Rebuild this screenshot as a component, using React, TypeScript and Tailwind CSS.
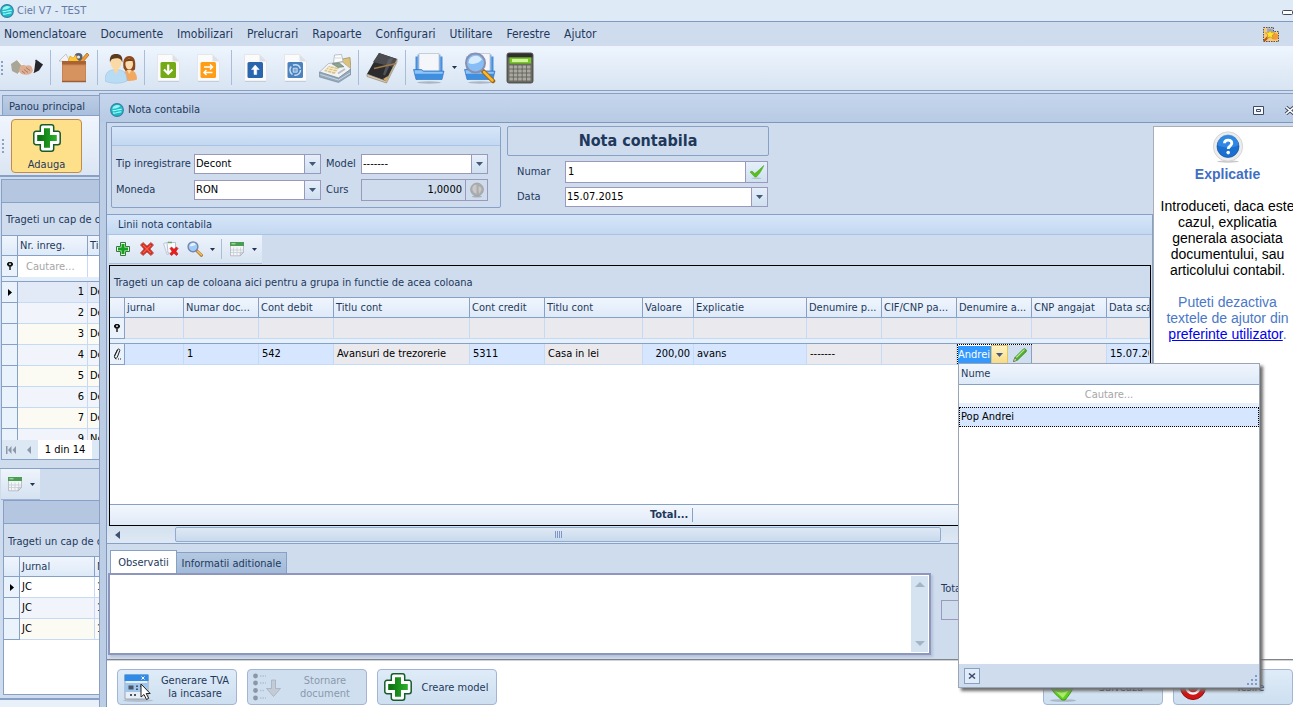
import type { ReactNode } from 'react';

function Globe() {
  return (
    <svg viewBox="0 0 16 16" className="size-[14px] shrink-0" aria-hidden="true">
      <circle cx="8" cy="8" r="7.300" fill="#19bccb" stroke="#3a7fa2" strokeWidth="1.200" />
      <path d="M2.500 6.500a6 6 0 0 1 9.500-3c-3 2.500-6 3.500-9.500 3z" fill="#9df3f2" />
      <path d="M3 8.500c3.200 1.200 6.500-2 10.400-1.200M3.500 11.300c3.500 1 6-1.800 9.600-1" stroke="#a8faf4" strokeWidth="1.400" fill="none" />
    </svg>
  );
}

function Plus({ className }: { className: string }) {
  return (
    <svg viewBox="0 0 28 28" className={className} aria-hidden="true">
      <defs>
        <linearGradient id="plusFill" x1="0" y1="0" x2="1" y2="0">
          <stop offset="0" stopColor="#0a6d10" />
          <stop offset="1" stopColor="#2bb22b" />
        </linearGradient>
      </defs>
      <path
        d="M9.500.8h9a2.200 2.200 0 0 1 2.200 2.200v4.300H25a2.200 2.200 0 0 1 2.200 2.200v9a2.200 2.200 0 0 1-2.200 2.200h-4.300V25a2.200 2.200 0 0 1-2.200 2.200h-9A2.200 2.200 0 0 1 7.300 25v-4.300H3a2.200 2.200 0 0 1-2.200-2.200v-9A2.200 2.200 0 0 1 3 7.300h4.300V3A2.200 2.200 0 0 1 9.500.8z"
        fill="#fff"
        stroke="#175d2b"
        strokeWidth="1.500"
      />
      <path d="M11 4.200h6V11h6.800v6H17v6.800h-6V17H4.200v-6H11z" fill="url(#plusFill)" />
    </svg>
  );
}

function SmallPlus() {
  return (
    <svg viewBox="0 0 16 16" className="size-4" aria-hidden="true">
      <path d="M5.500 1.500h5v4h4v5h-4v4h-5v-4h-4v-5h4z" fill="#e9f7e9" stroke="#2f7a3c" strokeWidth="1" strokeLinejoin="round" />
      <path d="M6.500 3h3v3.500H13v3H9.500V13h-3V9.500H3v-3h3.500z" fill="#17a01d" />
    </svg>
  );
}

function Cross() {
  return (
    <svg viewBox="0 0 16 16" className="size-4" aria-hidden="true">
      <path d="M1.500 4 4 1.500 8 5l4-3.500L14.500 4 11 8l3.500 4-2.500 2.500L8 11l-4 3.500L1.500 12 5 8z" fill="#d4261b" stroke="#b9655d" strokeWidth="1" />
      <path d="M4 4l8 8M12 4l-8 8" stroke="#f2604f" strokeWidth="1.200" />
    </svg>
  );
}

function CopyCross() {
  return (
    <svg viewBox="0 0 16 16" className="size-4" aria-hidden="true">
      <path d="M.5 2.500 6 1l3 11-5 1.500z" fill="#f3f6fa" stroke="#b4bfd0" strokeWidth=".8" />
      <path d="M4 1.500h8.500V12H5z" fill="#fbfcff" stroke="#a9b4c6" strokeWidth=".8" />
      <path d="M5 1.500h4" stroke="#6aa86a" strokeWidth="1.500" />
      <path d="m7 7.500 1.500-1.500 2.500 2.300L13.500 6 15 7.500 13 10.300l2 2.700-1.500 1.500-2.500-2.200-2.500 2.200L7 13l2-2.700z" fill="#ee1c1c" stroke="#b71515" strokeWidth=".6" />
    </svg>
  );
}

function Magnifier({ className }: { className: string }) {
  return (
    <svg viewBox="0 0 16 16" className={className} aria-hidden="true">
      <path d="m9.500 9.500 5 4.800" stroke="#b77a2c" strokeWidth="3" strokeLinecap="round" />
      <path d="m10.500 10.200 4 3.900" stroke="#f3c35f" strokeWidth="1.400" strokeLinecap="round" />
      <circle cx="6" cy="5.800" r="4.900" fill="#9fcdf8" stroke="#7585ad" strokeWidth="1.400" />
      <path d="M2.800 5a3.300 3.300 0 0 1 6-1.500c-2 1.500-4 2-6 1.500z" fill="#e6f4ff" />
    </svg>
  );
}

function Sheet() {
  return (
    <svg viewBox="0 0 16 16" className="size-4" aria-hidden="true">
      <path d="M1.500 1.500h13v9.800l-3.300 3.500H1.500z" fill="#f3f5f7" stroke="#b3bac4" strokeWidth=".9" />
      <path d="M1 1h14v4H1z" fill="#4b9d51" />
      <path d="M2.500 2.800h4" stroke="#bfe6bf" />
      <path d="M4.500 6.500V14M8 6.500V14M11.500 6.500v4M2 9h12M2 11.500h9" stroke="#c7ced8" strokeWidth=".8" />
      <path d="M14.500 11.300h-3.300v3.500z" fill="#d7dce3" stroke="#a7afba" strokeWidth=".6" />
    </svg>
  );
}

function Caret() {
  return (
    <svg viewBox="0 0 5 3" className="h-[3px] w-[5px] shrink-0 text-[#1f3352]" aria-hidden="true">
      <path d="M0 0h5L2.500 3z" fill="currentColor" />
    </svg>
  );
}

function DropCaret() {
  return (
    <svg viewBox="0 0 7 4" className="h-1 w-[7px] shrink-0 text-[#44587a]" aria-hidden="true">
      <path d="M0 0h7L3.500 4z" fill="currentColor" />
    </svg>
  );
}

function Check({ className }: { className: string }) {
  return (
    <svg viewBox="0 0 16 16" className={className} aria-hidden="true">
      <ellipse cx="7.500" cy="14.200" rx="5" ry=".8" fill="#b4c1cc" />
      <path d="M1 8 3 7l2.800 2.600C8.500 7.500 11.500 4.500 14.800 1.500 12.800 6.500 10 10.500 7.300 13H5.800z" fill="#56c01f" stroke="#3f9f1a" strokeWidth=".5" />
    </svg>
  );
}

function Handshake() {
  return (
    <svg viewBox="0 0 32 32" className="size-8" aria-hidden="true">
      <path d="M0 12 6 8l5 6-4 8-6-3z" fill="#a9a697" />
      <path d="m6 8 2-.6 5 6.500-4 8.600-2-.5 4-8z" fill="#f4f2ec" />
      <path d="m25 7.500 7 5-4 6-5 2.500-4-6z" fill="#24262b" />
      <path d="m19 13 4-5 1.500 1-1.500 11-2 .5z" fill="#edeff3" />
      <path d="M9 14.500c2-2 5-1.500 6-.8 2-1 4-.6 5.500.8l1.500 4c-1 3-4 4.500-7 4.200-3 0-6-1-7-3.200z" fill="#dcae93" />
      <path d="M11 19l3 2.500M13 17.500l4 3M15 15.500l4 3" stroke="#a97555" strokeWidth=".9" />
    </svg>
  );
}

function Box() {
  return (
    <svg viewBox="0 0 32 32" className="size-8" aria-hidden="true">
      <path d="m1 9 7-7 4 8z" fill="#f3f3f3" stroke="#b9bcc0" strokeWidth=".8" />
      <circle cx="20.500" cy="5" r="4" fill="#54606b" />
      <circle cx="20.500" cy="5" r="1.600" fill="#e6e9ec" />
      <path d="m10 10 2-6 3 2 3-3 1 4 3 3z" fill="#ffc62f" stroke="#db9320" strokeWidth=".6" />
      <path d="m22 9 7-8 2 2-6 7z" fill="#f79c2c" stroke="#9c6322" strokeWidth=".7" />
      <path d="M4 9h24v21H4z" fill="#c98352" />
      <path d="M4 9h24v3.500H4z" fill="#a86236" />
      <path d="M5 13.500h22V29L5 30z" fill="#d69360" />
      <path d="M4 29.500h24" stroke="#9c5d34" strokeWidth="1.500" />
    </svg>
  );
}

function People() {
  return (
    <svg viewBox="0 0 32 32" className="size-8" aria-hidden="true">
      <path d="M18.500 16c-1-7 .5-12 5.800-12S31 9 30 17.500l-3 2h-6z" fill="#8a4a1d" />
      <path d="M17 28c0-6.500 2.500-10 7-10 5 0 8 3 8 9.500-3 1.500-9 2-15 .5z" fill="#f3a862" />
      <path d="M22 18h4.500l-2.300 4z" fill="#fbd9a5" />
      <ellipse cx="24.200" cy="12" rx="3.800" ry="5.500" fill="#fbdcae" />
      <path d="M20 10c1-4 6-4.500 8.500-1-3 .3-5-.5-8.500 1z" fill="#7a3f17" />
      <path d="M0 29c0-8 3-11.500 11-11.500S22 21 22 29c-6 3-16 3-22 0z" fill="#b9dcf5" stroke="#8fbce0" strokeWidth=".5" />
      <path d="M8 17h6l-3 5.500z" fill="#f9d3a0" />
      <ellipse cx="11" cy="10.500" rx="5.500" ry="7" fill="#fbd9a5" />
      <path d="M5 10.500C4.200 4.500 6.500 2 11 2s7.200 2.500 6.300 8.500c-.9-3-2-4-4.200-4.300-3 .4-7-.8-8.100 4.300z" fill="#5b3a20" />
    </svg>
  );
}

function DocIcon({ tone, children }: { tone: string; children: ReactNode }) {
  return (
    <svg viewBox="0 0 32 32" className="size-8" aria-hidden="true">
      <path d="M5.500 2.500h15l7 7V29h-22z" fill="#fbfbfc" stroke="#dfe3e8" strokeWidth=".8" />
      <path d="M20.500 2.500v7h7z" fill="#dde1e6" />
      <path d="M6 29.500h21" stroke="#c5ced8" />
      <rect x="8.500" y="10" width="15.500" height="16" rx="1.500" fill={tone} />
      {children}
    </svg>
  );
}

function Register() {
  return (
    <svg viewBox="0 0 32 32" className="size-8" aria-hidden="true">
      <path d="m18 8 13-2.500 1 12-9 6z" fill="#dcc27a" stroke="#8d7f55" strokeWidth=".6" />
      <path d="m14.500 11 1-8 7-.5 1.500 7z" fill="#fdfdfe" stroke="#aab3bd" strokeWidth=".8" />
      <path d="M16 6h6" stroke="#c4ccd4" strokeWidth=".8" />
      <path d="m.5 20 9-8.500 14-1.500 8.500 7-12.500 9z" fill="#f0f2f4" stroke="#98a0a8" strokeWidth=".6" />
      <path d="m.5 20 19 6L32 17v5.500l-12.500 8L.5 25z" fill="#93a9bd" stroke="#748596" strokeWidth=".6" />
      <path d="m1.500 22.500 18 5.500 11.500-7" stroke="#c9d6e2" strokeWidth="1" fill="none" />
      <path d="m5 19 5-5 10 2-4.500 6z" fill="#d9c48c" />
      <path d="m7 17.500 10.500 2.500M8.800 15.700 19 17.800M8 20l3.500-5.500M12 21l3.500-5.500" stroke="#fff7dc" strokeWidth=".8" fill="none" />
      <path d="m13 11.800 7-1 5 4-6 .7z" fill="#8aa48d" stroke="#5d6f63" strokeWidth=".5" />
      <path d="m19 21.500 7-4.500" stroke="#b5bec7" strokeWidth="1.500" />
    </svg>
  );
}

function Book() {
  return (
    <svg viewBox="0 0 32 32" className="size-8" aria-hidden="true">
      <path d="m13 1 18 6-11 22L1 22z" fill="#2c2c2e" />
      <path d="m13 1 18 6-4 8L7 10z" fill="#4b4c50" />
      <path d="m22 8 3-2.500 2 1-8 17-2-1z" fill="#6b6d72" opacity=".6" />
      <path d="m1 22 19 7 11-22v3L20.500 31 1 24.500z" fill="#d9cdb6" stroke="#77654c" strokeWidth=".5" />
      <path d="m8 16.500 22-5" stroke="#a07a4a" strokeWidth="1.300" />
      <path d="m17 27 5-3-1 6z" fill="#d2aa6a" />
    </svg>
  );
}

function FolderBody() {
  return (
    <>
      <ellipse cx="16" cy="30.500" rx="12" ry="1.200" fill="#aab6c3" />
      <path d="M2.500 4.500h27V22h-27z" fill="#4a8ddb" />
      <path d="M4.500 2.500h23V22h-23z" fill="#7db2ec" />
      <path d="M6 1.500h20V19H6z" fill="#f4f6f9" stroke="#b5bdc8" strokeWidth=".7" />
      <path d="M.5 17.500h8l2 1.500h20.500L29 27.500H3z" fill="#3f8fe0" stroke="#2b6fbf" strokeWidth=".6" />
      <path d="M1.500 18.300h7l2 1.500h19.500l-.5 2H2z" fill="#8ec4f6" />
    </>
  );
}

function Folder() {
  return (
    <svg viewBox="0 0 32 32" className="size-8" aria-hidden="true">
      <FolderBody />
    </svg>
  );
}

function FolderSearch() {
  return (
    <svg viewBox="0 0 32 32" className="size-8" aria-hidden="true">
      <FolderBody />
      <path d="m19 19 10 10" stroke="#9a6411" strokeWidth="4.500" strokeLinecap="round" />
      <path d="m20 20 8.500 8.500" stroke="#ffb62e" strokeWidth="2.500" strokeLinecap="round" />
      <circle cx="11.500" cy="11" r="9.500" fill="#86bdf4" stroke="#8a8fae" strokeWidth="2" />
      <path d="M4.500 11a7.200 7.200 0 0 1 13.500-3.500C15 11.500 9 13 4.500 11z" fill="#d7ebff" />
    </svg>
  );
}

function Calculator() {
  const rows = [13.5, 17.5, 21.5, 25.5];
  const cols = [5.4, 9.8, 14.2, 18.6, 23];
  return (
    <svg viewBox="0 0 32 32" className="size-8" aria-hidden="true">
      <rect x="3" y="1" width="26" height="30" rx="2" fill="#6a6962" stroke="#3b3b37" strokeWidth=".8" />
      <rect x="3.500" y="1.500" width="25" height="4" rx="1.500" fill="#30312c" />
      <rect x="5.500" y="5.500" width="21.500" height="6" fill="#76c823" />
      <rect x="8" y="7" width="16" height="3" fill="#d0f59d" />
      {rows.map((y) => cols.map((x) => <rect key={`${x}-${y}`} x={x} y={y} width="3.500" height="3" rx=".5" fill="#a9a9a2" />))}
    </svg>
  );
}

function Sep() {
  return (
    <span className="flex w-[7px] shrink-0 justify-center self-stretch py-1" aria-hidden="true">
      <span className="w-px bg-[#a9bdd8]" />
    </span>
  );
}

function ToolButton({ label, children }: { label: string; children: ReactNode }) {
  return (
    <button type="button" aria-label={label} className="flex w-10 shrink-0 items-center justify-center">
      {children}
    </button>
  );
}

function SmallTool({ label, children }: { label: string; children: ReactNode }) {
  return (
    <button type="button" aria-label={label} className="flex h-full w-6 shrink-0 items-center justify-center">
      {children}
    </button>
  );
}

function CaretButton({ label }: { label: string }) {
  return (
    <button type="button" aria-label={label} className="flex h-full w-[11px] shrink-0 items-center justify-center">
      <Caret />
    </button>
  );
}

function Grip() {
  return (
    <span className="flex w-1 shrink-0 flex-col items-center justify-center gap-0.5 self-stretch" aria-hidden="true">
      <span className="size-0.5 bg-[#8ba2c4]" />
      <span className="size-0.5 bg-[#8ba2c4]" />
      <span className="size-0.5 bg-[#8ba2c4]" />
      <span className="size-0.5 bg-[#8ba2c4]" />
    </span>
  );
}

function Combo({ id, value }: { id: string; value: string }) {
  return (
    <span className="flex h-5 min-w-0 flex-1 border border-[#9a98bb] bg-white">
      <select id={id} className="min-w-0 flex-1 appearance-none bg-white px-px text-black outline-none">
        <option>{value}</option>
      </select>
      <span className="flex w-4 items-center justify-center border-l border-[#9a98bb] bg-linear-to-b from-[#e6effa] to-[#cfe0f0]" aria-hidden="true">
        <DropCaret />
      </span>
    </span>
  );
}

function Pin() {
  return (
    <svg viewBox="0 0 6 8" className="mx-auto h-2 w-1.5" aria-hidden="true">
      <path d="M0 1.500 1.500 0h3L6 1.500V3L4.500 4.500H3.700V8H2.300V4.500H1.500L0 3z" fill="#111" />
      <rect x="2" y="1.500" width="2" height="1.200" fill="#fff" />
    </svg>
  );
}

function RowArrow() {
  return (
    <svg viewBox="0 0 4 7" className="mx-auto h-[7px] w-1" aria-hidden="true">
      <path d="M0 0v7l4-3.500z" fill="#000" />
    </svg>
  );
}

function ActionButton({ icon, lines, disabled }: { icon: ReactNode; lines: string[]; disabled?: boolean }) {
  return (
    <button
      type="button"
      disabled={disabled}
      className="flex h-9 w-[120px] shrink-0 items-center rounded-sm border border-[#a3b5d4] bg-linear-to-b from-[#dfebf8] to-[#cddff0] pl-1 text-[#1e395b] disabled:bg-none disabled:bg-[#d0dfef] disabled:text-[#8a99ad]"
    >
      {icon}
      <span className="flex flex-1 flex-col text-center leading-[13px]">
        {lines.map((line) => (
          <span key={line}>{line}</span>
        ))}
      </span>
    </button>
  );
}

const MENU = ['Nomenclatoare', 'Documente', 'Imobilizari', 'Prelucrari', 'Rapoarte', 'Configurari', 'Utilitare', 'Ferestre', 'Ajutor'];

const HEAD = 'overflow-hidden border-r border-b border-[#86a0c6] bg-linear-to-b from-[#f0f5fd] to-[#deeaf8] p-0 pl-0.5 text-left font-normal whitespace-nowrap text-[#1e395b]';
const INDICATOR = 'border-r border-b border-[#86a0c6] bg-[#eaf2fc] p-0';

function Sidebar() {
  const entries = [
    ['1', 'Decont'],
    ['2', 'Decont'],
    ['3', 'Decont'],
    ['4', 'Decont'],
    ['5', 'Decont'],
    ['6', 'Decont'],
    ['7', 'Decont'],
    ['9', 'Nota'],
  ];
  return (
    <aside className="flex w-[99px] shrink-0 flex-col overflow-hidden whitespace-nowrap">
      <div className="mt-1 ml-0.5 flex h-5 shrink-0 items-center border border-r-0 border-b-0 border-[#86a0c6] bg-linear-to-b from-[#bccde5] to-[#a9bfdc] pl-1.5 pt-0.5 text-[#1e395b]">Panou principal</div>
      <div className="flex h-[62px] shrink-0 border-t border-b-2 border-[#86a0c6] bg-linear-to-b from-[#f0f5fd] to-[#dbe6f3] pt-[3px] pb-0.5">
        <span className="flex px-px"><Grip /></span>
        <button type="button" className="ml-[5px] flex w-[71px] flex-col items-center rounded-sm border border-[#c58a45] bg-[#ffe08a] pt-1 text-[#1e395b]">
          <Plus className="size-7" />
          <span className="mt-1.5">Adauga</span>
        </button>
      </div>

      <section className="mt-0.5 ml-px flex h-[281px] shrink-0 flex-col overflow-hidden border-y border-l border-[#86a0c6]">
        <div className="h-[23px] shrink-0 border-b border-[#86a0c6] bg-[#b5c7e0]" />
        <div className="flex h-[33px] shrink-0 items-center border-b border-[#86a0c6] pt-0.5 pl-1 text-[#1e395b]">Trageti un cap de coloana</div>
        <div className="min-h-0 flex-1 overflow-hidden bg-white">
          <table className="w-40 table-fixed border-separate border-spacing-0">
            <colgroup>
              <col className="w-4" />
              <col className="w-[70px]" />
              <col />
            </colgroup>
            <thead>
              <tr className="h-5">
                <th className={HEAD} aria-label="Rand" />
                <th className={HEAD}>Nr. inreg.</th>
                <th className={HEAD}>Tip</th>
              </tr>
            </thead>
            <tbody>
              <tr className="h-[21px]">
                <td className={INDICATOR}><Pin /></td>
                <td className="border-r border-[#c5daf5] p-0">
                  <input aria-label="Cautare numar" placeholder="Cautare..." className="block w-full pl-2 outline-none placeholder:text-[#a6a6a6]" />
                </td>
                <td className="p-0" />
              </tr>
              <tr className="h-[5px]">
                <td colSpan={3} className="border-b border-[#86a0c6] bg-[#e4eefb] p-0" />
              </tr>
              {entries.map(([no, kind], i) => (
                <tr key={no} className={`h-[21px] ${i === 0 ? 'bg-[#e1eaf6]' : i % 2 ? 'bg-[#f1f5fb]' : 'bg-[#fbfaf3]'}`}>
                  <td className={INDICATOR}>{i === 0 && <RowArrow />}</td>
                  <td className="border-r border-b border-[#c5daf5] p-0 pr-[3px] text-right">{no}</td>
                  <td className="border-b border-[#c5daf5] p-0 pl-0.5">{kind}</td>
                </tr>
              ))}
            </tbody>
          </table>
        </div>
        <div className="flex h-[19px] shrink-0 items-center bg-[#dde8f5] text-[#8c98a9]">
          <button type="button" aria-label="Prima" className="flex w-[18px] justify-center">
            <svg viewBox="0 0 10 8" className="h-2 w-2.5"><path d="M0 0h1.500v8H0zM5.500 0v8L2 4zM10 0v8L6.500 4z" fill="currentColor" /></svg>
          </button>
          <button type="button" aria-label="Anterioara" className="flex w-[18px] justify-center">
            <svg viewBox="0 0 4 8" className="h-2 w-1"><path d="M4 0v8L0 4z" fill="currentColor" /></svg>
          </button>
          <span className="flex h-full w-[54px] items-center justify-center bg-white text-black">1 din 14</span>
        </div>
      </section>

      <div className="mt-2 flex h-8 shrink-0 border-t border-[#86a0c6]">
        <div className="ml-px flex w-[39px] items-center border-b border-[#9db2d2] bg-linear-to-b from-[#eef4fb] to-[#d5e2f1] pl-0.5">
          <SmallTool label="Export"><Sheet /></SmallTool>
          <CaretButton label="Optiuni export" />
        </div>
      </div>

      <section className="ml-[3px] flex min-h-0 flex-1 flex-col overflow-hidden border-y border-l border-[#86a0c6] bg-white">
        <div className="h-[23px] shrink-0 border-b border-[#86a0c6] bg-[#b5c7e0]" />
        <div className="flex h-[33px] shrink-0 items-center border-b border-[#86a0c6] bg-[#cfdcee] pt-1 pl-1 text-[#1e395b]">Trageti un cap de coloana</div>
        <table className="w-40 table-fixed border-separate border-spacing-0">
          <colgroup>
            <col className="w-4" />
            <col className="w-[75px]" />
            <col />
          </colgroup>
          <thead>
            <tr className="h-5">
              <th className={HEAD} aria-label="Rand" />
              <th className={HEAD}>Jurnal</th>
              <th className={HEAD}>N</th>
            </tr>
          </thead>
          <tbody>
            {['bg-white', 'bg-[#f1f5fb]', 'bg-[#fbfaf3]'].map((tone, i) => (
              <tr key={tone} className={`h-[21px] ${tone}`}>
                <td className={INDICATOR}>{i === 0 && <RowArrow />}</td>
                <td className="border-r border-b border-[#c5daf5] p-0 pl-0.5">JC</td>
                <td className="border-b border-[#c5daf5] p-0 pl-0.5">1</td>
              </tr>
            ))}
          </tbody>
        </table>
      </section>
      <div className="mt-[3px] h-[9px] shrink-0 border-t-2 border-[#86a0c6] bg-[#e8f0fa]" />
    </aside>
  );
}

const COLUMNS = [
  { title: 'jurnal', value: '', width: 'w-[59px]' },
  { title: 'Numar doc...', value: '1', width: 'w-[75px]' },
  { title: 'Cont debit', value: '542', width: 'w-[75px]' },
  { title: 'Titlu cont', value: 'Avansuri de trezorerie', width: 'w-[136px]', locked: true },
  { title: 'Cont credit', value: '5311', width: 'w-[75px]' },
  { title: 'Titlu cont', value: 'Casa in lei', width: 'w-[98px]', locked: true },
  { title: 'Valoare', value: '200,00', width: 'w-[51px]', right: true },
  { title: 'Explicatie', value: 'avans', width: 'w-[113px]' },
  { title: 'Denumire p...', value: '-------', width: 'w-[75px]', locked: true },
  { title: 'CIF/CNP pa...', value: '', width: 'w-[75px]', locked: true },
  { title: 'Denumire a...', value: 'Andrei', width: 'w-[75px]', editing: true },
  { title: 'CNP angajat', value: '', width: 'w-[75px]', locked: true },
  { title: 'Data scadenta', value: '15.07.2015', width: '' },
];

function EntryGrid() {
  return (
    <div className="mr-px ml-0.5 flex min-h-0 flex-1 flex-col overflow-hidden border border-black bg-white">
      <div className="flex h-8 shrink-0 items-center border-b border-[#86a0c6] bg-[#cfdcee] pt-0.5 pl-1 text-[#1e395b]">
        Trageti un cap de coloana aici pentru a grupa in functie de acea coloana
      </div>
      <table className="w-full table-fixed border-separate border-spacing-0">
        <colgroup>
          <col className="w-[15px]" />
          {COLUMNS.map((c, i) => (
            <col key={i} className={c.width} />
          ))}
        </colgroup>
        <thead>
          <tr className="h-5">
            <th className={HEAD} aria-label="Rand" />
            {COLUMNS.map((c, i) => (
              <th key={i} className={HEAD}>{c.title}</th>
            ))}
          </tr>
        </thead>
        <tbody>
          <tr className="h-[21px] bg-[#eaeaee]">
            <td className={INDICATOR}><Pin /></td>
            {COLUMNS.map((_, i) => (
              <td key={i} className="border-r border-b border-[#c5daf5] p-0" />
            ))}
          </tr>
          <tr className="h-[5px]">
            <td colSpan={14} className="border-b border-[#86a0c6] bg-[#e6f0fb] p-0" />
          </tr>
          <tr className="h-[21px]">
            <td className={INDICATOR}>
              <svg viewBox="0 0 8 12" className="mx-auto h-3 w-2" aria-hidden="true">
                <path d="m1.500 8 3-6.500c1-1 2.500-.4 2.300 1L4.300 9.200C3.500 11 1 10.200 1.500 8l3-6M3 11.300l-1.500-2" fill="none" stroke="#222" />
                <path d="M5 11h1M7 11h1" stroke="#222" />
              </svg>
            </td>
            {COLUMNS.map((c, i) =>
              c.editing ? (
                <td key={i} className="border-b border-[#c5daf5] p-0">
                  <div className="flex h-5 border-t border-l border-dotted border-black bg-white">
                    <input aria-label="Denumire angajat" defaultValue={c.value} className="my-px w-[33px] bg-[#3399ff] text-white outline-none" />
                    <button type="button" aria-label="Deschide lista" className="flex w-[17px] items-center justify-center border border-[#e3c75a] bg-linear-to-b from-[#fff3c4] to-[#f7dc86]">
                      <DropCaret />
                    </button>
                    <button type="button" aria-label="Modifica" className="flex flex-1 items-center justify-center border-r border-[#86a0c6] bg-[#cfdff0]">
                      <svg viewBox="0 0 16 16" className="size-4" aria-hidden="true">
                        <path d="m1.500 14.500 1.500-4 8.500-8.500c1.200-1 3.700 1 2.700 2.600L5.500 13z" fill="#4fb02b" stroke="#2f7f18" strokeWidth=".8" />
                        <path d="m4.300 10.500 8.200-8.200" stroke="#b6ea8e" strokeWidth="1.200" />
                        <path d="m1.500 14.500 1.200-3.500 2.400 2.200z" fill="#eee4c4" stroke="#6c6c4a" strokeWidth=".6" />
                      </svg>
                    </button>
                  </div>
                </td>
              ) : (
                <td
                  key={i}
                  className={`overflow-hidden border-r border-b border-[#c5daf5] p-0 px-[3px] whitespace-nowrap ${c.locked ? 'bg-[#eaeaee]' : 'bg-[#d5e6fe]'} ${c.right ? 'text-right' : ''}`}
                >
                  {c.value}
                </td>
              ),
            )}
          </tr>
        </tbody>
      </table>
      <div className="mt-auto flex h-[21px] shrink-0 items-center border-t border-[#86a0c6] bg-linear-to-b from-[#f3f7fd] to-[#dfeaf8] pl-[540px] font-bold text-[#1e395b]">
        <span className="border-r border-[#86a0c6] pr-1">Total...</span>
      </div>
    </div>
  );
}

function NamePopup() {
  return (
    <div className="absolute top-60 left-[851px] z-10 flex h-[325px] w-[302px] flex-col border border-[#9aa5b5] bg-white shadow-[3px_3px_3px_#6e6e6e]">
      <div className="flex h-[21px] shrink-0 items-center border-b border-[#86a0c6] bg-linear-to-b from-[#f0f5fd] to-[#deeaf8] pl-0.5 text-[#1e395b]">Nume</div>
      <input aria-label="Cautare nume" placeholder="Cautare..." className="h-[18px] shrink-0 text-center outline-none placeholder:text-[#a6a6a6]" />
      <div className="h-1 shrink-0 bg-[#e6f0fb]" />
      <button type="button" className="flex h-5 shrink-0 items-center border border-dotted border-black bg-[#d5e6fe] pl-px text-left">Pop Andrei</button>
      <div className="mt-auto flex h-[23px] shrink-0 items-center justify-between bg-[#cfdcee] pr-0.5 pl-[5px]">
        <button type="button" aria-label="Inchide" className="flex size-4 items-center justify-center border border-[#86a0c6] bg-[#e2ecf8]">
          <svg viewBox="0 0 8 6" className="h-1.5 w-2"><path d="m1 .5 6 5M7 .5l-6 5" stroke="#3a4c72" strokeWidth="1.500" /></svg>
        </button>
        <svg viewBox="0 0 10 10" className="mb-0.5 size-2.5 self-end" aria-hidden="true">
          <path d="M8 0h2v2H8zM8 4h2v2H8zM4 4h2v2H4zM8 8h2v2H8zM4 8h2v2H4zM0 8h2v2H0z" fill="#7f9cc6" />
        </svg>
      </div>
    </div>
  );
}

function HelpPanel() {
  return (
    <aside className="mt-[3px] w-[140px] shrink-0 border-t border-l border-[#a9adb5] bg-white font-['Liberation_Sans',sans-serif] text-sm leading-4">
      <div className="flex w-[147px] flex-col items-center text-center">
        <svg viewBox="0 0 32 32" className="mt-1 size-8" aria-hidden="true">
          <ellipse cx="16" cy="30.500" rx="11" ry="1.200" fill="#c9c9c9" />
          <circle cx="16" cy="15.500" r="14.700" fill="#ececec" stroke="#cfcfcf" strokeWidth=".8" />
          <circle cx="16" cy="15.500" r="11" fill="#1a6fd0" stroke="#0c4a9c" strokeWidth=".6" />
          <path d="M5.500 14a10.500 10.500 0 0 1 21 0c-6 3.500-14 3.500-21 0z" fill="#3c93ea" opacity=".7" />
          <path d="M12.500 12.300c0-4.300 7.300-4.300 7.300 0 0 3-3.600 2.800-3.600 5.700" fill="none" stroke="#fff" strokeWidth="2.800" />
          <circle cx="16.200" cy="21.600" r="1.800" fill="#fff" />
        </svg>
        <h2 className="mt-[3px] font-bold text-[#3f6fc4]">Explicatie</h2>
        <p className="mt-4 text-black">
          <span className="whitespace-nowrap">Introduceti, daca este</span>
          <br />
          cazul, explicatia
          <br />
          generala asociata
          <br />
          documentului, sau
          <br />
          articolului contabil.
        </p>
        <p className="mt-4 whitespace-nowrap text-[#4a78c8]">
          Puteti dezactiva
          <br />
          textele de ajutor din
          <br />
          <a href="#preferinte" className="text-[#0000ee] underline">preferinte utilizator</a>.
        </p>
      </div>
    </aside>
  );
}

function EntryWindow() {
  return (
    <section className="mt-0.5 flex min-w-0 flex-1 flex-col border-t border-l border-[#8ba0c0] bg-[#bccde6]">
      <header className="flex h-7 shrink-0 items-center bg-linear-to-b from-[#c5d5ed] to-[#b8cbe4] pt-1 pl-2.5 text-[#1e395b]">
        <Globe />
        <h1 className="ml-1">Nota contabila</h1>
        <button type="button" aria-label="Restaureaza" className="ml-auto">
          <svg viewBox="0 0 11 9" className="h-[9px] w-[11px]"><path d="M.5.5h10v8H.5zM3.500 3.500h4v2h-4z" fill="#f5f8fc" stroke="#3e4a63" /></svg>
        </button>
        <button type="button" aria-label="Inchide fereastra" className="-mr-[3px] ml-5">
          <svg viewBox="0 0 12 9" className="h-[9px] w-3"><path d="m2 1.200 8 6.600M10 1.200 2 7.800" stroke="#3e4a63" strokeWidth="3.600" /><path d="m2 1.200 8 6.600M10 1.200 2 7.800" stroke="#fff" strokeWidth="1.500" /></svg>
        </button>
      </header>
      <div className="relative ml-1.5 flex min-h-0 flex-1 flex-col border-t border-l border-[#7f97bd] bg-[#cfdcee]">
        <div className="flex min-h-0 flex-1 border-b border-[#808388]">
          <div className="flex min-w-0 flex-1 flex-col">
            <div className="mt-[3px] ml-1 flex shrink-0 gap-1.5 text-[#1e395b]">
              <form className="w-[390px] rounded-xs border border-[#86a0c6]">
                <div className="h-[19px] border-b border-[#a9c3e4] bg-linear-to-b from-[#d6e6f9] to-[#c3d8f1]" />
                <div className="mt-2 flex items-center pr-3 pl-1">
                  <label htmlFor="tip" className="w-[78px]">Tip inregistrare</label>
                  <Combo id="tip" value="Decont" />
                  <label htmlFor="model" className="w-10 pl-[5px]">Model</label>
                  <Combo id="model" value="-------" />
                </div>
                <div className="mt-[5px] mb-1.5 flex items-center pr-3 pl-1">
                  <label htmlFor="moneda" className="w-[78px]">Moneda</label>
                  <Combo id="moneda" value="RON" />
                  <label htmlFor="curs" className="w-10 pl-[5px]">Curs</label>
                  <span className="flex h-[22px] min-w-0 flex-1 border border-[#9a98bb]">
                    <input id="curs" readOnly value="1,0000" className="min-w-0 flex-1 bg-[#cfdcee] pr-[3px] text-right text-black outline-none" />
                    <span className="flex w-[22px] items-center justify-center border-l border-[#9a98bb]" aria-hidden="true">
                      <svg viewBox="0 0 16 16" className="size-4">
                        <ellipse cx="8" cy="14.500" rx="5" ry="1" fill="#aab3bf" />
                        <circle cx="8" cy="7.500" r="6.500" fill="#adadad" stroke="#8f8f8f" strokeWidth=".5" />
                        <path d="M3.500 5.500c1-2.500 2.500-3 4-2.800v9c-2.500-.7-4.500-3-4-6.200zM9.500 4.500c1.500 0 3 1 3 3l-2 4c-.8-1-1-4-1-7z" fill="#c9c9c9" />
                      </svg>
                    </span>
                  </span>
                </div>
              </form>
              <form className="flex w-[262px] flex-col">
                <h2 className="flex h-[30px] items-center justify-center rounded-xs border border-[#86a0c6] text-base font-bold">Nota contabila</h2>
                <div className="mt-[5px] flex items-center pr-px pl-2.5">
                  <label htmlFor="numar" className="w-12">Numar</label>
                  <span className="flex h-[22px] min-w-0 flex-1 border border-[#9a98bb] bg-white">
                    <input id="numar" defaultValue="1" className="min-w-0 flex-1 pl-0.5 text-black outline-none" />
                    <button type="button" aria-label="Valideaza numar" className="flex w-[22px] items-center justify-center border-l border-[#9a98bb] bg-linear-to-b from-[#e6effa] to-[#cfe0f0]">
                      <Check className="size-4" />
                    </button>
                  </span>
                </div>
                <div className="mt-1 flex items-center pr-px pl-2.5">
                  <label htmlFor="data" className="w-12">Data</label>
                  <Combo id="data" value="15.07.2015" />
                </div>
              </form>
            </div>

            <section className="mt-1.5 flex min-h-0 flex-1 flex-col border-y border-r border-[#86a0c6]">
              <h2 className="flex h-5 shrink-0 items-center border-b border-[#a9c3e4] bg-linear-to-b from-[#d6e6f9] to-[#c3d8f1] pt-px pl-[11px] text-[#1e395b]">Linii nota contabila</h2>
              <div className="flex h-[30px] shrink-0 pb-px pl-0.5">
                <div className="flex items-center border-b border-[#a9bdd8] bg-linear-to-b from-[#edf3fb] to-[#d8e4f2] pr-0.5 pl-0.5">
                  <SmallTool label="Adauga linie"><SmallPlus /></SmallTool>
                  <SmallTool label="Sterge linie"><Cross /></SmallTool>
                  <SmallTool label="Sterge tot"><CopyCross /></SmallTool>
                  <SmallTool label="Cauta"><Magnifier className="size-4" /></SmallTool>
                  <CaretButton label="Optiuni cautare" />
                  <Sep />
                  <SmallTool label="Export linii"><Sheet /></SmallTool>
                  <CaretButton label="Optiuni export linii" />
                </div>
              </div>
              <EntryGrid />
              <div className="flex h-[17px] shrink-0 items-center bg-linear-to-b from-[#d3e0ee] to-[#dfe9f5] pr-[211px] pl-2">
                <svg viewBox="0 0 5 8" className="h-2 w-[5px]" aria-hidden="true"><path d="M5 0v8L0 4z" fill="#3f5273" /></svg>
                <span className="ml-[55px] flex h-[15px] flex-1 items-center justify-center gap-px rounded-xs border border-[#91aad0] bg-linear-to-b from-[#dfe8f5] to-[#c9daec]" aria-hidden="true">
                  <span className="h-[7px] w-px bg-[#7f97c4]" />
                  <span className="h-[7px] w-px bg-[#7f97c4]" />
                  <span className="h-[7px] w-px bg-[#7f97c4]" />
                  <span className="h-[7px] w-px bg-[#7f97c4]" />
                </span>
              </div>
            </section>

            <div className="mt-1.5 flex shrink-0 items-end pl-[3px] text-[#1e395b]" role="tablist">
              <button type="button" role="tab" aria-selected="true" className="h-[23px] w-[67px] border border-b-0 border-[#86a0c6] bg-white pt-0.5">Observatii</button>
              <button type="button" role="tab" aria-selected="false" className="h-[21px] w-[110px] border border-b-0 border-l-0 border-[#86a0c6] bg-linear-to-b from-[#b4c8e1] to-[#a2bbd9] pt-0.5">Informatii aditionale</button>
            </div>
            <div className="flex shrink-0 pb-1 pl-px">
              <div className="flex h-[82px] w-[823px] border-2 border-[#8d97bd] bg-white p-px shadow-[2px_2px_2px_#b4c2d8]">
                <textarea aria-label="Observatii" className="min-w-0 flex-1 resize-none overflow-hidden outline-none" />
                <div className="flex w-[17px] flex-col items-center justify-between bg-[#d5e2ef] py-1.5 text-[#a3b4c9]" aria-hidden="true">
                  <svg viewBox="0 0 10 5" className="h-[5px] w-2.5"><path d="M5 0l5 5H0z" fill="currentColor" /></svg>
                  <svg viewBox="0 0 10 5" className="h-[5px] w-2.5"><path d="M0 0h10L5 5z" fill="currentColor" /></svg>
                </div>
              </div>
              <div className="ml-2.5 flex min-w-0 flex-1 flex-col pt-[9px] text-[#1e395b]">
                <label htmlFor="total">Total</label>
                <input id="total" readOnly className="mt-1 h-5 w-28 border border-[#9a98bb]" />
              </div>
            </div>
          </div>
          <HelpPanel />
        </div>
        <footer className="flex h-[47px] shrink-0 gap-2.5 border-t border-[#cfd2d6] bg-white pt-2 pl-2.5">
          <ActionButton
            lines={['Generare TVA', 'la incasare']}
            icon={
              <svg viewBox="0 0 32 32" className="size-8 shrink-0" aria-hidden="true">
                <ellipse cx="16" cy="29.500" rx="15" ry="1.500" fill="#b3c0cf" />
                <path d="M3 4h23v24H3z" fill="#e9eef4" stroke="#8795a5" strokeWidth=".8" />
                <path d="M3 12h23v9H3z" fill="#9fc6ec" />
                <path d="M2.500 3.500h24V10h-24z" fill="#2f8be6" />
                <path d="m19.500 5.500 3 3m0-3-3 3" stroke="#fff" />
                <path d="M6.500 14.500h5v4h-5zM14 14.500h2v1.600h-2zM18 14.500h2v1.600h-2zM14 17.500h2v1.600h-2zM8 23h2v2H8zM12 23h2v2h-2z" fill="#4b5563" />
                <path d="m19 13 0 13 3-2.500 2.500 5 2.200-1.200-2.500-4.800h4z" fill="#fff" stroke="#222" />
              </svg>
            }
          />
          <ActionButton
            disabled
            lines={['Stornare', 'document']}
            icon={
              <svg viewBox="0 0 32 32" className="size-8 shrink-0" aria-hidden="true">
                <circle cx="3.500" cy="5" r="2.400" fill="#8b97a6" />
                <circle cx="3.500" cy="12" r="2.400" fill="#8b97a6" />
                <circle cx="3.500" cy="19.500" r="2.400" fill="#8b97a6" />
                <circle cx="3.500" cy="27" r="2.400" fill="#8b97a6" />
                <path d="M8 5h6M8 12h6M8 19.500h4M8 27h6" stroke="#b4c0cd" strokeWidth="1.500" strokeDasharray="1.500 1" />
                <path d="M19.500 9h4v8.500h5l-7 8-7-8h5z" fill="#c3ccd6" stroke="#a3afbc" strokeWidth=".8" />
              </svg>
            }
          />
          <ActionButton lines={['Creare model']} icon={<span className="flex size-8 shrink-0 items-center justify-center"><Plus className="size-7" /></span>} />
          <div className="ml-auto flex gap-2.5">
            <ActionButton
              lines={['Salveaza']}
              icon={
                <svg viewBox="0 0 32 32" className="size-8 shrink-0" aria-hidden="true">
                  <ellipse cx="15" cy="29.500" rx="13" ry="1.300" fill="#a9b7c6" />
                  <path d="M1 14 8 10l6 6L27 4l2 2c-2 9-6 16-12 23h-3C9 25 4 20 1 14z" fill="#63cf1a" stroke="#3b9a10" />
                  <path d="M7 20c4 2 10 2 14-1l-6 8z" fill="#a8ec6c" />
                </svg>
              }
            />
            <ActionButton
              lines={['Iesire']}
              icon={
                <svg viewBox="0 0 32 32" className="size-8 shrink-0" aria-hidden="true">
                  <circle cx="15" cy="16" r="12.500" fill="#d11414" stroke="#8d0b0b" />
                  <circle cx="15" cy="16" r="6.500" fill="none" stroke="#fff" strokeWidth="2.500" />
                  <path d="M15 6v9" stroke="#fff" strokeWidth="3" />
                </svg>
              }
            />
          </div>
        </footer>
        <NamePopup />
      </div>
    </section>
  );
}

export default function App() {
  return (
    <div className="flex h-screen flex-col overflow-hidden bg-[#cfdcee] font-['DejaVu_Sans_Condensed','DejaVu_Sans',sans-serif] text-[11px] leading-[14px] text-black">
      <header className="flex h-[22px] shrink-0 items-center border-b border-[#7e9ac0] bg-[#deeaf6] text-[#6579a6]">
        <span className="flex w-[17px]"><Globe /></span>
        <span>Ciel V7 - TEST</span>
        <button type="button" aria-label="Minimizeaza" className="ml-auto pt-1">
          <svg viewBox="0 0 11 5" className="h-[5px] w-[11px]"><rect x=".5" y=".5" width="10" height="4" rx="1" fill="#fff" stroke="#3e4a63" /></svg>
        </button>
      </header>
      <nav className="flex h-6 shrink-0 items-center gap-[14px] pl-1 text-xs text-[#1e395b]">
        {MENU.map((item) => (
          <a key={item} href={`#${item.toLowerCase()}`}>{item}</a>
        ))}
        <button type="button" aria-label="Asistent" className="mr-3.5 ml-auto">
          <svg viewBox="0 0 16 15" className="h-[15px] w-4">
            <path d="M.5.500h10v4h5v10H.5z" fill="#f8c878" stroke="#555" strokeDasharray="1.500 1" />
            <path d="M4 1.500h6v3.500H4z" fill="#8ea9ee" />
            <circle cx="12" cy="9.500" r="3.300" fill="#f59a3a" />
            <path d="m1 14 6-6" stroke="#b5541a" strokeWidth="2.200" />
            <path d="m7 2.500 1.300 3L12 6 9.300 8.200l.7 3.300L7 9.800 4 11.500 5 8 2.500 6l3.300-.3z" fill="#ffe72e" stroke="#b88a12" strokeWidth=".6" />
          </svg>
        </button>
      </nav>
      <div className="flex h-[45px] shrink-0 items-center border-b border-[#86a0c6] bg-linear-to-b from-[#eef5fe] to-[#d8e4f2] pb-px">
        <Grip />
        <span className="w-[3px]" />
        <ToolButton label="Parteneri"><Handshake /></ToolButton>
        <Sep />
        <ToolButton label="Articole"><Box /></ToolButton>
        <Sep />
        <ToolButton label="Angajati"><People /></ToolButton>
        <Sep />
        <ToolButton label="Intrari">
          <DocIcon tone="#76a916"><path d="M16.200 12.500v8.500M12 17.500l4.200 4.200 4.200-4.200" fill="none" stroke="#fff" strokeWidth="2.200" /></DocIcon>
        </ToolButton>
        <ToolButton label="Transferuri">
          <DocIcon tone="#ff9d16"><path d="M12 15h8.500M18 12.500l2.500 2.500-2.500 2.500M20.500 20.500h-8.500M14.500 18 12 20.500l2.500 2.500" fill="none" stroke="#fff" strokeWidth="1.500" /></DocIcon>
        </ToolButton>
        <Sep />
        <ToolButton label="Iesiri">
          <DocIcon tone="#2a66ad"><path d="M16.200 13 20.200 17.500h-2.500v5H15v-5h-2.500z" fill="#fff" stroke="#fff" strokeWidth=".5" /></DocIcon>
        </ToolButton>
        <ToolButton label="Sincronizare">
          <DocIcon tone="#4a82bf">
            <circle cx="16.200" cy="18" r="5.300" fill="none" stroke="#c7dcf2" strokeWidth="1.500" strokeDasharray="9 2" />
            <path d="M14.200 16.200h4v4h-4z" fill="#7fa9d6" stroke="#dceaf8" strokeWidth=".8" />
          </DocIcon>
        </ToolButton>
        <ToolButton label="Casa de marcat"><Register /></ToolButton>
        <Sep />
        <ToolButton label="Registru"><Book /></ToolButton>
        <Sep />
        <ToolButton label="Dosare"><Folder /></ToolButton>
        <CaretButton label="Optiuni dosare" />
        <ToolButton label="Cauta in dosare"><FolderSearch /></ToolButton>
        <ToolButton label="Calculator"><Calculator /></ToolButton>
      </div>
      <main className="flex min-h-0 flex-1">
        <Sidebar />
        <EntryWindow />
      </main>
    </div>
  );
}
